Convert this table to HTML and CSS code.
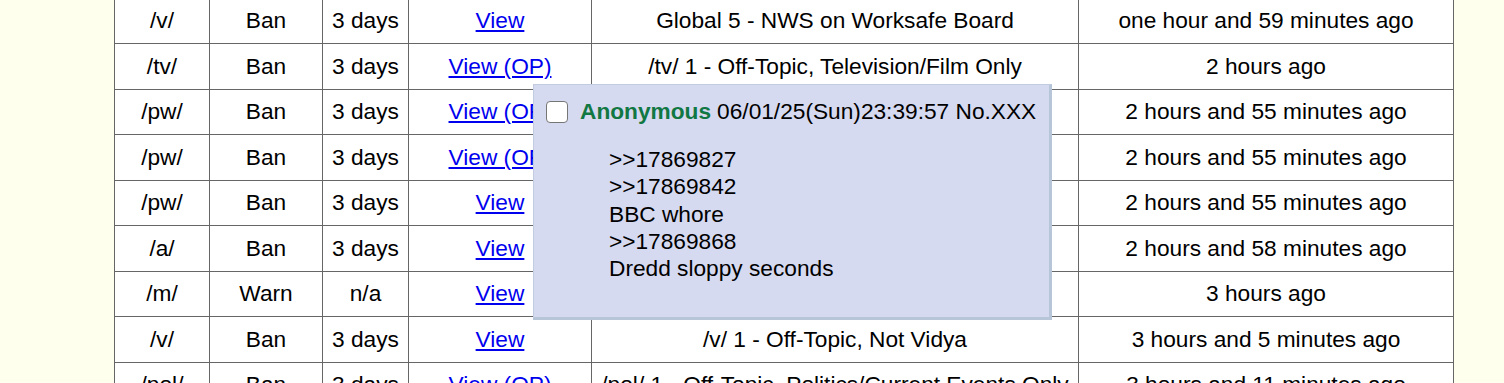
FILE: index.html
```html
<!DOCTYPE html>
<html>
<head>
<meta charset="utf-8">
<link rel="stylesheet" href="styles.css">
</head>
<body>
<div class="page">
  <table class="bans">
    <colgroup>
      <col class="c-board"><col class="c-type"><col class="c-len"><col class="c-post"><col class="c-reason"><col class="c-time">
    </colgroup>
    <tbody>
      <tr><td>/v/</td><td>Ban</td><td>3 days</td><td><a href="#">View</a></td><td>Global 5 - NWS on Worksafe Board</td><td>one hour and 59 minutes ago</td></tr>
      <tr><td>/tv/</td><td>Ban</td><td>3 days</td><td><a href="#">View (OP)</a></td><td>/tv/ 1 - Off-Topic, Television/Film Only</td><td>2 hours ago</td></tr>
      <tr><td>/pw/</td><td>Ban</td><td>3 days</td><td><a href="#">View (OP)</a></td><td>/pw/ 1 - Off-Topic</td><td>2 hours and 55 minutes ago</td></tr>
      <tr><td>/pw/</td><td>Ban</td><td>3 days</td><td><a href="#">View (OP)</a></td><td>/pw/ 1 - Off-Topic</td><td>2 hours and 55 minutes ago</td></tr>
      <tr><td>/pw/</td><td>Ban</td><td>3 days</td><td><a href="#">View</a></td><td>/pw/ 1 - Off-Topic</td><td>2 hours and 55 minutes ago</td></tr>
      <tr><td>/a/</td><td>Ban</td><td>3 days</td><td><a href="#">View</a></td><td>/a/ 1 - Off-Topic</td><td>2 hours and 58 minutes ago</td></tr>
      <tr><td>/m/</td><td>Warn</td><td>n/a</td><td><a href="#">View</a></td><td>/m/ 2 - Spam</td><td>3 hours ago</td></tr>
      <tr><td>/v/</td><td>Ban</td><td>3 days</td><td><a href="#">View</a></td><td>/v/ 1 - Off-Topic, Not Vidya</td><td>3 hours and 5 minutes ago</td></tr>
      <tr><td>/pol/</td><td>Ban</td><td>3 days</td><td><a href="#">View (OP)</a></td><td>/pol/ 1 - Off-Topic, Politics/Current Events Only</td><td>3 hours and 11 minutes ago</td></tr>
    </tbody>
  </table>

  <div class="preview">
    <div class="post-head">
      <span class="check"></span>
      <span class="name">Anonymous</span>
      <span class="date">06/01/25(Sun)23:39:57 No.XXX</span>
    </div>
    <blockquote class="post-body">&gt;&gt;17869827<br>&gt;&gt;17869842<br>BBC whore<br>&gt;&gt;17869868<br>Dredd sloppy seconds</blockquote>
  </div>
</div>
</body>
</html>
```
FILE: styles.css
```css
html, body {
  margin: 0;
  padding: 0;
}
body {
  background: #ffffee;
  font-family: "Liberation Sans", Arial, sans-serif;
  font-size: 22.7px;
  color: #000;
  overflow: hidden;
}
.page {
  position: relative;
  height: 383px;
  overflow: hidden;
}
.bans {
  border-collapse: collapse;
  table-layout: fixed;
  width: 1340px;
  margin: -2.5px 0 0 114px;
  background: #fff;
  border: 1px solid #666;
}
.c-board { width: 95px; }
.c-type { width: 113px; }
.c-len { width: 86px; }
.c-post { width: 183px; }
.c-reason { width: 487px; }
.c-time { width: 375px; }
.bans td {
  border: 1px solid #666;
  text-align: center;
  white-space: nowrap;
  line-height: 25.5px;
  padding: 9.5px 0;
  overflow: hidden;
}
.bans a {
  color: #0000ee;
  text-decoration: underline;
}
.preview {
  position: absolute;
  left: 533px;
  top: 84px;
  width: 519px;
  height: 236px;
  box-sizing: border-box;
  background: #d6daf0;
  border-left: 1px solid #c3cbe0;
  border-top: 1px solid #c3cbe0;
  border-right: 3px solid #b7c5d9;
  border-bottom: 3px solid #b7c5d9;
  padding: 13px 0 0 12px;
}
.post-head {
  display: flex;
  align-items: center;
  line-height: 27.2px;
  white-space: nowrap;
}
.check {
  width: 22px;
  height: 22px;
  box-sizing: border-box;
  border: 1.5px solid #767676;
  border-radius: 4px;
  background: #fff;
  margin-right: 12px;
  flex: none;
}
.name {
  color: #117743;
  font-weight: bold;
  margin-right: 6px;
}
.post-body {
  margin: 21px 0 0 63px;
  line-height: 27.2px;
}
```
